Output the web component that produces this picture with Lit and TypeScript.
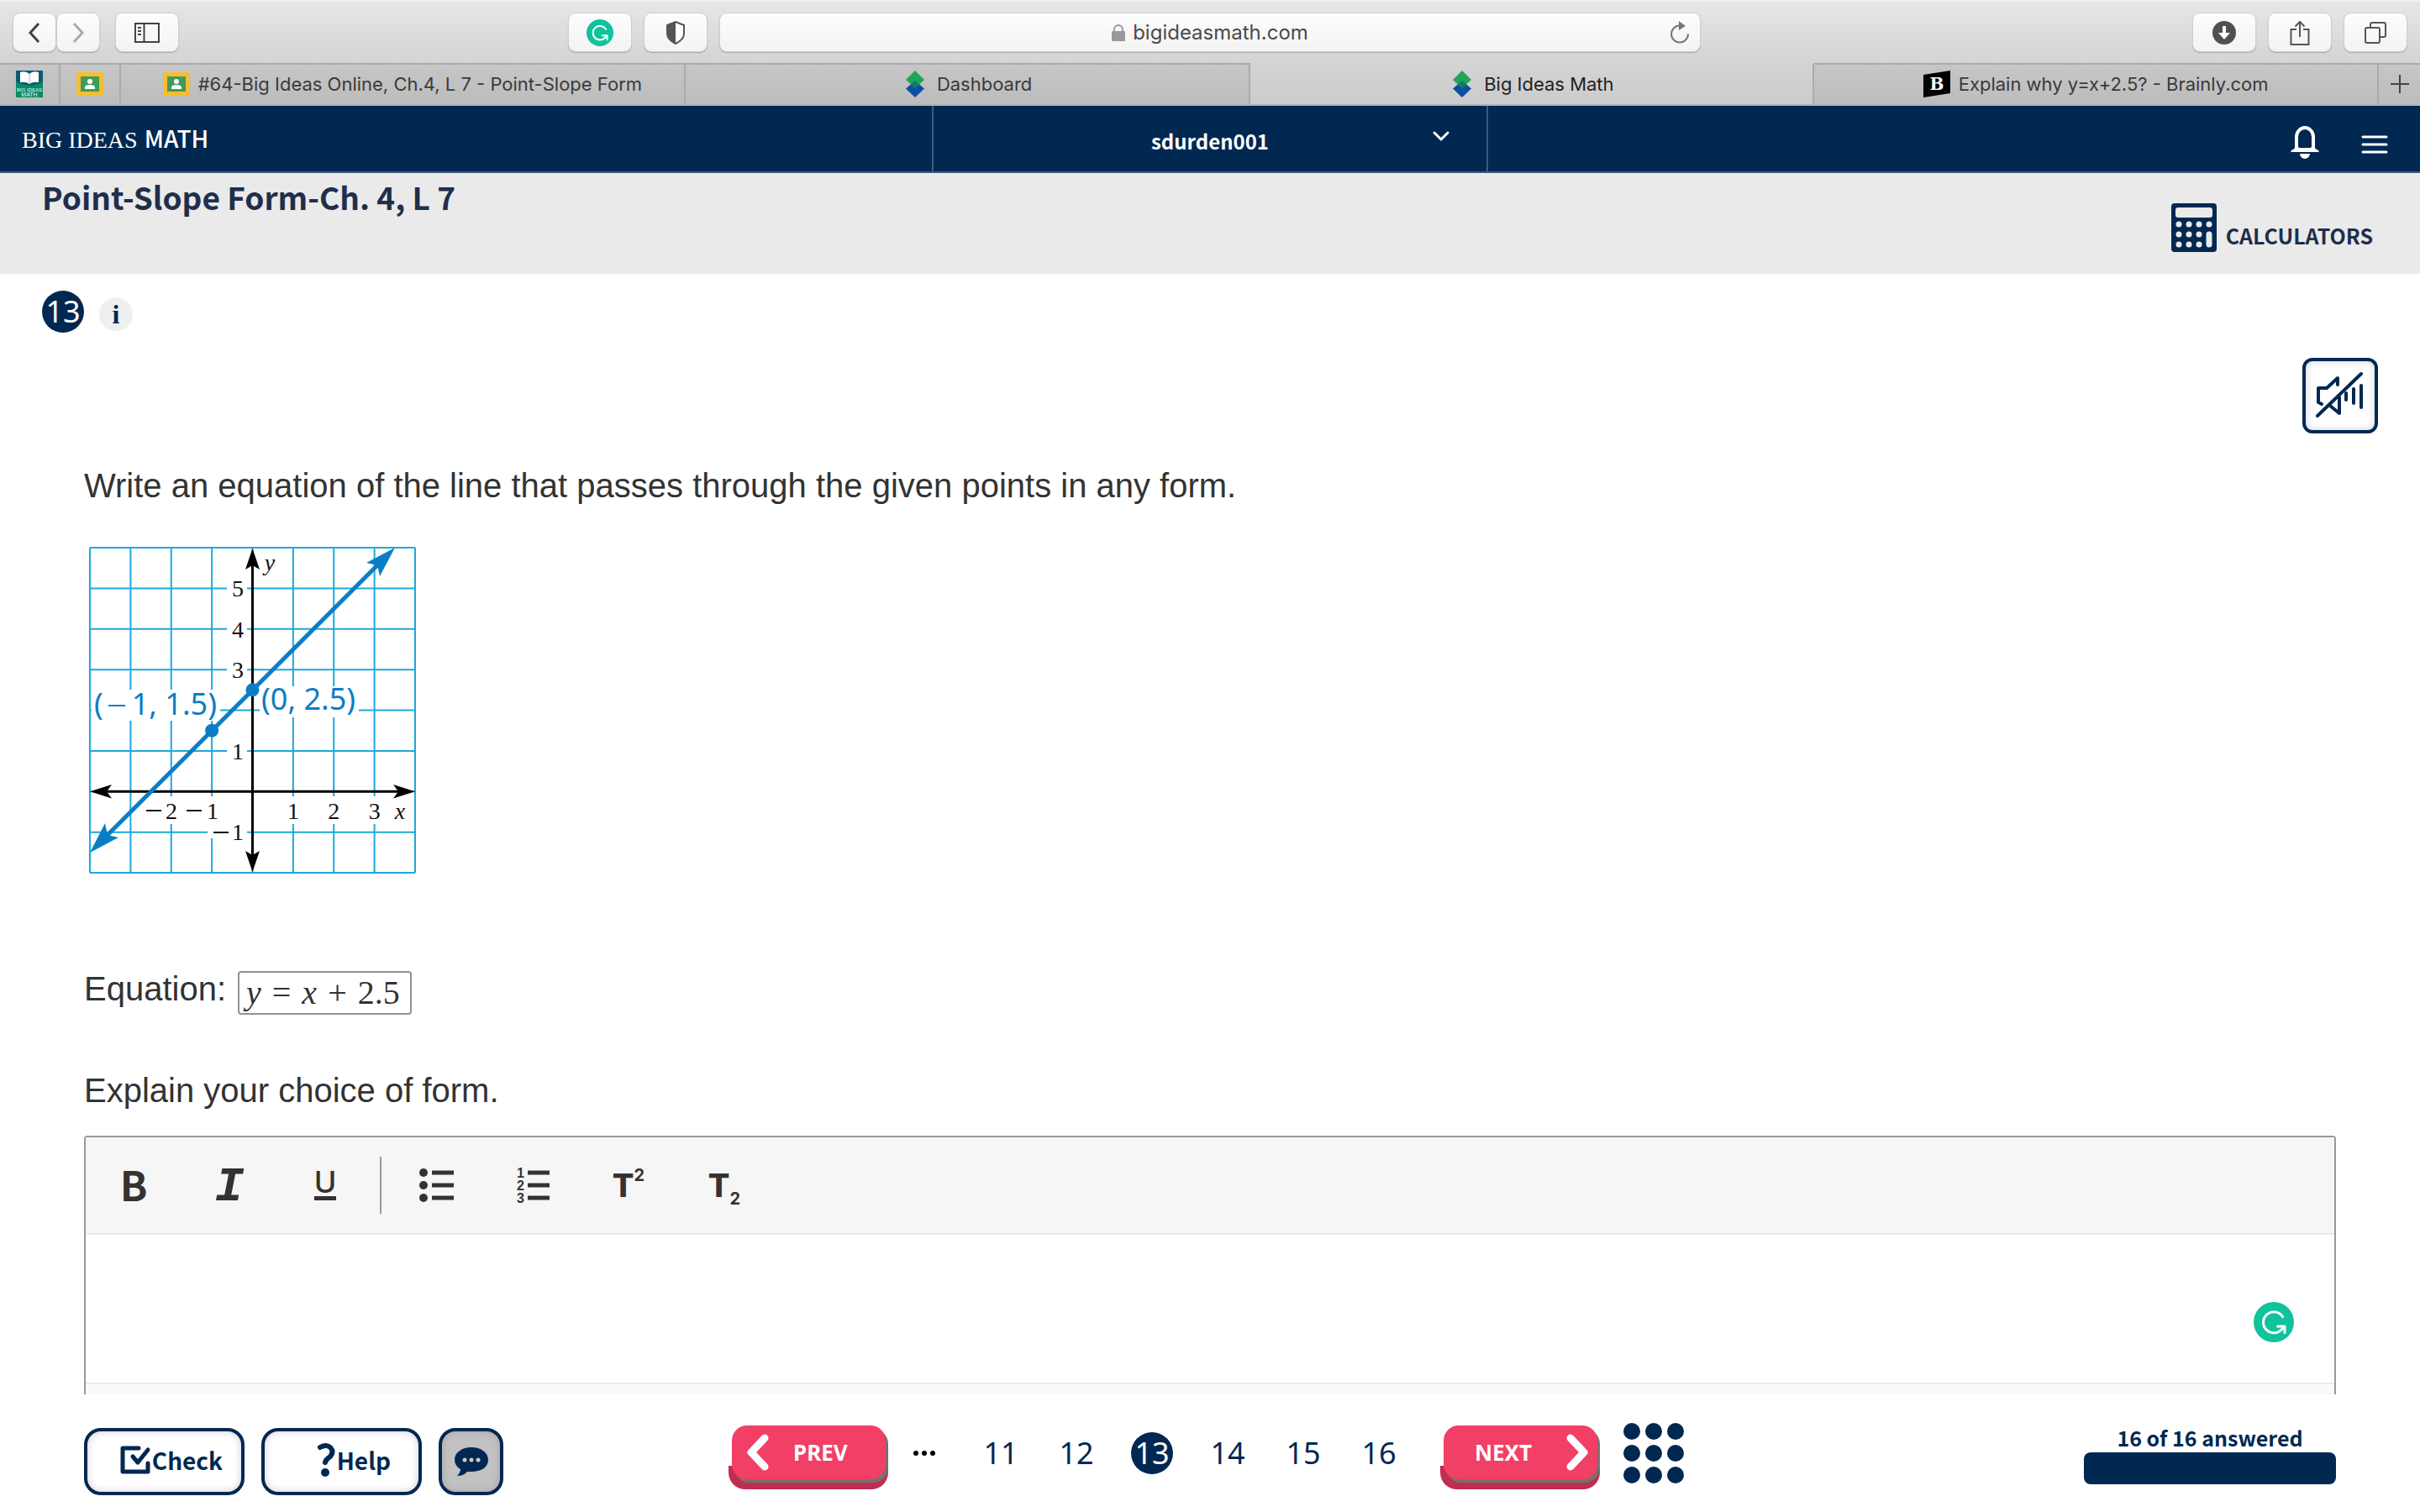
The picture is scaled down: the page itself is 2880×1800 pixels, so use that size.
import { LitElement, html, svg, css } from "lit";
import { customElement, state } from "lit/decorators.js";
import { classMap } from "lit/directives/class-map.js";

const CELL = 48.375;
const SPAN = CELL * 8;
const ORIGIN = { x: CELL * 4, y: CELL * 6 };

const grammarly = svg`
  <circle cx="24" cy="24" r="24" fill="#11c39a" />
  <path d="M34.500 17.500 A12.500 12.500 0 1 0 33 33 L36 30" fill="none" stroke="#fff" stroke-width="3" stroke-linecap="round" />
  <path d="M28.500 29 H37 V36.500" fill="none" stroke="#fff" stroke-width="3" stroke-linecap="round" stroke-linejoin="round" />`;

const classroom = html`<svg class="fav" viewBox="0 0 32 32" aria-hidden="true">
  <rect x="0" y="2" width="32" height="28" rx="2" fill="#f6bd31" />
  <rect x="5" y="7" width="22" height="18" fill="#3f9a5b" />
  <circle cx="16" cy="13" r="3" fill="#fff" />
  <path d="M10 22 v-2 q0 -3 6 -3 t6 3 v2z" fill="#fff" />
</svg>`;

const diamonds = html`<svg class="fav" viewBox="0 0 32 32" aria-hidden="true">
  <path d="M16 12 L27 21.500 L16 32 L5 21.500z" fill="#0a4fa3" />
  <path d="M16 0 L27 11 L16 21 L5 11z" fill="#23a455" />
  <path d="M16 12 L21.500 16.500 L16 21.500 L10.500 16.500z" fill="#157a6a" />
</svg>`;

const brainly = html`<svg class="fav" viewBox="0 0 32 32" aria-hidden="true">
  <path d="M0 5 L32 0 V27 L0 32z" fill="#000" />
  <text x="16" y="23" text-anchor="middle" font-family="DejaVu Serif, serif" font-weight="700" font-size="20" fill="#fff">B</text>
</svg>`;

@customElement("line-graph")
class LineGraph extends LitElement {
  static styles = css`
    :host { display: block; }
    .plot { display: block; width: 388px; height: 388px; overflow: visible; }
    .grid { stroke: #1da9dc; stroke-width: 2; fill: none; }
    .mask { fill: #fff; }
    .axis { stroke: #000; stroke-width: 3; }
    .line { stroke: #0b7dc4; stroke-width: 5; }
    .mark { fill: #0b7dc4; }
    .tick { font: 28px "Liberation Serif", serif; text-anchor: middle; fill: #111; }
    .name { font-style: italic; }
    .minus { stroke: #111; stroke-width: 2; }
    .point { font: 36px "Noto Sans", sans-serif; fill: #0b7dc4; }
    .end { text-anchor: end; }
    .neg { stroke: #0b7dc4; stroke-width: 2; }
  `;

  render() {
    const steps = [...Array(9).keys()];
    const px = (x: number) => ORIGIN.x + x * CELL;
    const py = (y: number) => ORIGIN.y - y * CELL;
    return html`<svg class="plot" viewBox="0 0 388 388" role="img" aria-label="Line through (−1, 1.5) and (0, 2.5)">
      ${steps.map((i) => svg`<path class="grid" d="M${i * CELL} 0 V${SPAN} M0 ${i * CELL} H${SPAN}" />`)}
      ${[5, 4, 3, 1].map((n) => svg`<rect class="mask" x="163" y=${py(n) - 12} width="24" height="24" />`)}
      <rect class="mask" x="140" y="329" width="47" height="17" />
      <rect class="mask" x="64" y="296" width="88" height="33" />
      <rect class="mask" x="226" y="296" width="126" height="33" />
      <rect class="mask" x="2" y="169" width="153" height="37" />
      <rect class="mask" x="202" y="165" width="118" height="37" />

      <path class="axis" d="M${ORIGIN.x} 14 V374 M14 ${ORIGIN.y} H374" />
      <path d="M193.500 1 L202 26 L193.500 21 L185 26z M193.500 386 L202 361 L193.500 366 L185 361z" />
      <path d="M387 290.250 L361 282 L367 290.250 L361 298.500z M0 290.250 L26 282 L20 290.250 L26 298.500z" />

      <path class="line" d="M16 347 L347 16" />
      <path class="mark" d="M363 0 L329 18 L342 21 L345 34z M0 363 L18 328 L21 342 L34 345z" />
      <circle class="mark" cx=${px(-1)} cy=${py(1.5)} r="8" />
      <circle class="mark" cx=${px(0)} cy=${py(2.5)} r="8" />

      ${[5, 4, 3, 1].map((n) => svg`<text class="tick" x="176" y=${py(n) + 10}>${n}</text>`)}
      <text class="tick" x="176" y="348">1</text>
      ${[1, 2, 3].map((n) => svg`<text class="tick" x=${px(n)} y="323">${n}</text>`)}
      <text class="tick" x="97" y="323">2</text>
      <text class="tick" x="146" y="323">1</text>
      <path class="minus" d="M67 313 h18 M115 313 h18 M147 339 h18" />
      <text class="tick name" x="214" y="27">y</text>
      <text class="tick name" x="369" y="323">x</text>
      <text class="point" x="5" y="199">(</text>
      <path class="neg" d="M22 188 h20" />
      <text class="point end" x="151" y="199">1, 1.5)</text>
      <text class="point" x="204" y="193">(0, 2.5)</text>
    </svg>`;
  }
}

@customElement("app-root")
class AppRoot extends LitElement {
  @state() private page = 13;

  static styles = css`
    :host {
      display: flex;
      flex-direction: column;
      height: 100vh;
      overflow: hidden;
      background: #fff;
      color: #333;
      --navy: #002851;
      --source: "Noto Sans CJK SC", "Open Sans", sans-serif;
      --ui: Inter, Roboto, sans-serif;
    }
    * { box-sizing: border-box; }
    button, input, textarea, select { font: inherit; color: inherit; margin: 0; padding: 0; border: 0; background: none; }
    svg { display: block; overflow: visible; }

    .bar { display: flex; align-items: center; height: 75px; padding: 0 16px; background: linear-gradient(#e6e6e6, #d4d4d4); border-top: 2px solid #f2f2f2; }
    .key { display: grid; place-items: center; width: 74px; height: 45px; border-radius: 8px; background: linear-gradient(#fdfdfd, #f3f3f3); box-shadow: 0 0 0 1px #cfcfcf, 0 1px 1px 1px #a8a8a8; }
    .key.slim { width: 50px; }
    .keys { display: flex; flex: 1; gap: 16px; }
    .keys.end { justify-content: flex-end; }
    .pair { display: flex; gap: 2px; margin-right: 4px; }
    .keys .near { margin-left: auto; }
    .address { display: flex; align-items: center; width: 1166px; height: 45px; margin: 0 16px; padding: 0 10px; border-radius: 8px; background: linear-gradient(#fdfdfd, #f3f3f3); box-shadow: 0 0 0 1px #cfcfcf, 0 1px 1px 1px #a8a8a8; }
    .site { display: flex; flex: 1; justify-content: center; align-items: center; gap: 9px; padding-left: 28px; font: 24px/32px var(--ui); color: #4a4a4a; }
    .site input { field-sizing: content; }

    .tabs { display: flex; height: 51px; border-bottom: 2px solid #a9b8b8; background: linear-gradient(#d4d4d4, #cbcbcb); }
    .tab { display: flex; flex: 1; justify-content: center; align-items: center; gap: 10px; min-width: 0; padding-bottom: 1px; border-top: 2px solid #ababab; border-right: 2px solid #ababab; background: linear-gradient(#c6c6c6, #bcbcbc); font: 22px/28px var(--ui); color: #3a3a3a; text-decoration: none; }
    .tab.on { background: none; border-top-color: transparent; color: #222; }
    .tab.pin { flex: none; width: 72px; }
    .tab.add { flex: none; width: 49px; border-right: 0; }
    .fav { width: 32px; height: 32px; }

    .top { display: grid; grid-template-columns: 1fr 23% 1fr; height: 80px; border-bottom: 2px solid #41597a; background: var(--navy); color: #fff; }
    .brand { display: flex; align-items: baseline; gap: 8px; padding: 18px 26px; font: 28px/40px "Liberation Serif", serif; color: #fff; text-decoration: none; }
    .brand .math { font-family: "Noto Sans CJK SC", sans-serif; font-weight: 500; }
    .user { display: grid; border: solid #41597a; border-width: 0 2px; }
    .user select, .user svg { grid-area: 1 / 1; }
    .user select { appearance: none; padding-top: 4px; text-align: center; text-align-last: center; font: 700 24px/40px var(--source); outline: none; }
    .user option { color: #333; }
    .user svg { align-self: center; justify-self: end; margin: 0 44px 8px 0; pointer-events: none; }
    .tools { display: flex; justify-content: flex-end; align-items: center; gap: 50px; padding: 12px 39px 0 0; }
    .bell { margin-bottom: 6px; }

    .heading { display: flex; justify-content: space-between; height: 120px; padding: 0 56px 0 50px; background: #eaeaea; color: #1f2f4b; }
    .heading h1 { margin: 0; padding-top: 4px; font: 700 37px/48px var(--source); }
    .calc { display: flex; align-self: center; align-items: flex-end; gap: 11px; margin-top: 9px; font: 700 25px/32px var(--source); color: #1f2f4b; }
    .calc span { margin-bottom: 4px; }

    .main { flex: 1; min-height: 0; overflow: hidden; padding: 20px 100px 0; font: 40px/48px "Liberation Sans", sans-serif; }
    .badges { display: flex; align-items: center; gap: 18px; margin-left: -50px; height: 50px; }
    .num { display: grid; place-items: center; width: 50px; height: 50px; border-radius: 50%; background: var(--navy); color: #fff; font: 36px/50px "Noto Sans", sans-serif; }
    .info { display: grid; place-items: center; width: 40px; height: 40px; margin-top: 6px; border-radius: 50%; background: #efeff0; color: var(--navy); font: 700 32px/40px "Liberation Serif", serif; }
    .listen { display: grid; place-items: center; width: 90px; height: 90px; margin: 30px -50px 0 auto; border: 4px solid var(--navy); border-radius: 12px; box-shadow: inset 0 0 8px #ccd; }
    .ask { margin: 38px 0 50px; }
    .figure { margin-left: 7px; }
    .answer { display: flex; align-items: flex-start; gap: 14px; margin-top: 116px; line-height: 42px; }
    .formula { display: flex; align-items: center; gap: 13px; height: 52px; padding: 0 12px 0 8px; border: 2px solid #929292; border-radius: 4px; font: 40px/44px "Liberation Serif", serif; outline: none; }
    .why { display: block; margin: 66px 0 30px; }

    .editor { position: relative; border: 2px solid #999; border-radius: 4px; }
    .format { display: flex; align-items: center; height: 116px; background: #f6f6f6; border-bottom: 2px solid #e9e9e9; }
    .format button { display: grid; place-items: center; width: 114px; height: 80px; color: #333; }
    .format .rule { width: 2px; height: 68px; margin: 0 9px 0 8px; background: #999; }
    .bold { padding-bottom: 4px; font: 700 48px/60px var(--source); }
    .ital { padding-top: 6px; font: italic 700 58px/60px "Liberation Mono", monospace; }
    .under { height: 36px; border-bottom: 5px solid #333; font: 500 36px/28px var(--ui); }
    .script { display: flex; height: 44px; font: 800 38px/44px var(--ui); }
    .script small { align-self: flex-start; font: 700 20px/20px var(--ui); }
    .script .low { align-self: flex-end; line-height: 12px; }
    .editor textarea { display: block; width: 100%; height: 176px; resize: none; outline: none; }
    .status { height: 60px; border-top: 2px solid #e9e9e9; background: #fafafa; }
    .assist { position: absolute; right: 48px; top: 196px; width: 48px; height: 48px; }

    .foot { display: grid; grid-template-columns: 1fr auto 1fr; align-items: center; height: 140px; padding: 0 100px; color: var(--navy); }
    .acts { display: flex; gap: 20px; margin-top: 20px; }
    .act { display: flex; align-items: center; justify-content: flex-end; gap: 1px; width: 191px; height: 80px; padding: 0 22px 5px 0; border: 4px solid var(--navy); border-radius: 20px; background: #fff; box-shadow: inset 0 0 10px #ccd; font: 700 28px/40px var(--source); }
    .act.wide { padding-right: 33px; }
    .act.chat { justify-content: center; width: 77px; padding: 0; background: #c2c2c2; box-shadow: inset 0 0 10px #a4a4a8; }
    .pager { display: flex; align-items: center; padding-right: 9px; }
    .step { width: 190px; height: 76px; margin-top: 10px; padding: 0 3px 12px 4px; border-radius: 20px; background: linear-gradient(transparent 48px, #c02d50 48px); }
    .face { display: flex; align-items: center; height: 64px; border-radius: 18px; background: #f23f66; box-shadow: 3px 4px 0 #77706f; color: #fff; font: 700 26px/40px "Noto Sans", sans-serif; }
    .face.prev { padding-left: 18px; gap: 29px; }
    .face.next { justify-content: flex-end; padding-right: 11px; gap: 41px; }
    .more { width: 89px; display: flex; justify-content: center; padding-right: 3px; }
    .page { display: grid; place-items: center; width: 90px; font: 36px/50px "Noto Sans", sans-serif; }
    .page.on span { width: 50px; border-radius: 50%; background: var(--navy); color: #fff; }
    .space { margin-left: 28px; margin-right: 28px; }
    .done { justify-self: end; width: 300px; text-align: center; font: 700 25px/36px var(--source); }
    .meter { height: 38px; border-radius: 8px; background: #dde; overflow: hidden; }
    .fill { height: 100%; background: var(--navy); }
  `;

  private browserBar() {
    return html`<nav class="bar" aria-label="Browser">
      <div class="keys">
        <div class="pair">
          <button class="key slim" aria-label="Back"><svg width="16" height="26" viewBox="0 0 16 26"><path d="M13 2 L3 13 L13 24" fill="none" stroke="#444" stroke-width="3" /></svg></button>
          <button class="key slim" aria-label="Forward"><svg width="16" height="26" viewBox="0 0 16 26"><path d="M3 2 L13 13 L3 24" fill="none" stroke="#aaa" stroke-width="3" /></svg></button>
        </div>
        <button class="key" aria-label="Sidebar"><svg width="30" height="24" viewBox="0 0 30 24"><path d="M1 1 H29 V23 H1z M11.500 1 V23 M4 6 h4 M4 10 h4 M4 14 h4" fill="none" stroke="#444" stroke-width="2" /></svg></button>
        <button class="key near" aria-label="Writing assistant"><svg width="32" height="32" viewBox="0 0 48 48">${grammarly}</svg></button>
        <button class="key" aria-label="Privacy report"><svg width="24" height="28" viewBox="0 0 24 28"><path d="M12 1 L22 5 V15 Q22 22 12 27 Q2 22 2 15 V5z" fill="#fff" stroke="#555" stroke-width="2" /><path d="M12 1 L2 5 V15 Q2 22 12 27z" fill="#555" /></svg></button>
      </div>
      <div class="address">
        <label class="site">
          <svg width="16" height="20" viewBox="0 0 16 20" aria-hidden="true"><rect y="8" width="16" height="12" rx="1" fill="#999" /><path d="M3 9 V6 a5 5 0 0 1 10 0 V9" fill="none" stroke="#999" stroke-width="2" /></svg>
          <input aria-label="Address" .value=${"bigideasmath.com"} />
        </label>
        <button aria-label="Reload"><svg width="28" height="28" viewBox="0 0 28 28"><path d="M14 5.500 A10 10 0 1 0 24 15.500" fill="none" stroke="#777" stroke-width="2" /><path d="M13 0 L21 6 L13 11z" fill="#777" /></svg></button>
      </div>
      <div class="keys end">
        <button class="key" aria-label="Downloads"><svg width="28" height="28" viewBox="0 0 28 28"><circle cx="14" cy="14" r="14" fill="#505050" /><path d="M12 6 h4 v8 h5 L14 22 L7 14 h5z" fill="#fff" /></svg></button>
        <button class="key" aria-label="Share"><svg width="24" height="30" viewBox="0 0 24 30"><path d="M8 11 H1.500 V29 H22.500 V11 H16 M12 20 V2 M6.500 7.500 L12 2 L17.500 7.500" fill="none" stroke="#555" stroke-width="2" /></svg></button>
        <button class="key" aria-label="Show tabs"><svg width="26" height="26" viewBox="0 0 26 26"><rect x="1" y="7" width="17" height="18" rx="2" fill="none" stroke="#555" stroke-width="2" /><path d="M7 7 V3 q0 -2 2 -2 H23 q2 0 2 2 V16 q0 2 -2 2 H19" fill="none" stroke="#555" stroke-width="2" /></svg></button>
      </div>
    </nav>`;
  }

  private tabStrip() {
    return html`<nav class="tabs" aria-label="Tabs">
      <a class="tab pin" href="#" aria-label="Big Ideas Math book">
        <svg class="fav" viewBox="0 0 32 32"><rect width="32" height="32" fill="#0b8a63" /><path d="M0 0 H32 V13 Q16 22 0 13z" fill="#0a5a78" /><path d="M5 2 Q12 0 16 4 Q20 0 27 2 V14 Q20 13 16 16 Q12 13 5 14z" fill="#fff" /><path d="M16 4 V16" stroke="#9bc" stroke-width="1" /><text x="16" y="25" font-size="6" font-family="Liberation Sans" text-anchor="middle" fill="#dff">BIG IDEAS</text><text x="16" y="31" font-size="7" font-family="Liberation Sans" text-anchor="middle" fill="#dff">MATH</text></svg>
      </a>
      <a class="tab pin" href="#" aria-label="Classroom">${classroom}</a>
      <a class="tab" href="#">${classroom}<span>#64-Big Ideas Online, Ch.4, L 7 - Point-Slope Form</span></a>
      <a class="tab" href="#">${diamonds}<span>Dashboard</span></a>
      <a class="tab on" href="#" aria-current="page">${diamonds}<span>Big Ideas Math</span></a>
      <a class="tab" href="#">${brainly}<span>Explain why y=x+2.5? - Brainly.com</span></a>
      <button class="tab add" aria-label="New tab"><svg width="22" height="22" viewBox="0 0 22 22"><path d="M11 0 V22 M0 11 H22" stroke="#444" stroke-width="2" /></svg></button>
    </nav>`;
  }

  private siteHeader() {
    return html`<header>
      <div class="top">
        <a class="brand" href="#"><span>BIG IDEAS</span><span class="math">MATH</span></a>
        <label class="user">
          <select aria-label="Account"><option>sdurden001</option></select>
          <svg width="20" height="12" viewBox="0 0 20 12"><path d="M2 2 L10 10 L18 2" fill="none" stroke="#fff" stroke-width="3" stroke-linecap="round" stroke-linejoin="round" /></svg>
        </label>
        <div class="tools">
          <button class="bell" aria-label="Notifications"><svg width="36" height="40" viewBox="0 0 36 40"><path d="M8 29 V14 a10 11 0 0 1 20 0 V29" fill="none" stroke="#fff" stroke-width="4" /><path d="M2 30 Q8 27 8 22 L11 27 H25 L28 22 Q28 27 34 30 q2 2 -1 2 H3 q-3 0 -1 -2z M12 34 H24 a6 6 0 0 1 -12 0z" fill="#fff" /></svg></button>
          <button aria-label="Menu"><svg width="30" height="24" viewBox="0 0 30 24"><path d="M1 3 H29 M1 12 H29 M1 21 H29" stroke="#fff" stroke-width="3" stroke-linecap="round" /></svg></button>
        </div>
      </div>
      <div class="heading">
        <h1>Point-Slope Form-Ch. 4, L 7</h1>
        <button class="calc">
          <svg width="54" height="58" viewBox="0 0 54 58"><rect width="54" height="58" rx="4" fill="#002851" /><rect x="5" y="5" width="44" height="12" rx="3" fill="#eaeaea" />
            ${[25, 37, 49].map((y) => [9, 21, 33, 45].map((x) => (x === 45 && y > 25 ? "" : svg`<circle cx=${x} cy=${y} r="3.500" fill="#eaeaea" />`)))}
            <rect x="41.500" y="33.500" width="7" height="19" rx="3.500" fill="#eaeaea" /></svg>
          <span>CALCULATORS</span>
        </button>
      </div>
    </header>`;
  }

  private editor() {
    const bars = svg`<path d="M15 6 H41 M15 21 H41 M15 36 H41" stroke="#333" stroke-width="5" />`;
    return html`<div class="editor">
      <div class="format" role="toolbar" aria-label="Formatting">
        <button aria-label="Bold"><span class="bold">B</span></button>
        <button aria-label="Italic"><span class="ital">I</span></button>
        <button aria-label="Underline"><span class="under">U</span></button>
        <span class="rule"></span>
        <button aria-label="Bulleted list"><svg width="42" height="42" viewBox="0 0 42 42">${bars}<circle cx="5" cy="6" r="5" fill="#333" /><circle cx="5" cy="21" r="5" fill="#333" /><circle cx="5" cy="36" r="5" fill="#333" /></svg></button>
        <button aria-label="Numbered list"><svg width="42" height="42" viewBox="0 0 42 42">${bars}<g font-family="Liberation Sans, sans-serif" font-weight="700" font-size="16" fill="#333"><text x="2" y="12">1</text><text x="2" y="27">2</text><text x="2" y="42">3</text></g></svg></button>
        <button aria-label="Superscript"><span class="script">T<small>2</small></span></button>
        <button aria-label="Subscript"><span class="script">T<small class="low">2</small></span></button>
      </div>
      <textarea id="why" spellcheck="false"></textarea>
      <div class="status"></div>
      <button class="assist" aria-label="Check writing"><svg width="48" height="48" viewBox="0 0 48 48">${grammarly}</svg></button>
    </div>`;
  }

  private footer() {
    const answered = 16;
    const total = 16;
    return html`<footer class="foot">
      <div class="acts">
        <button class="act"><svg width="37" height="36" viewBox="0 0 37 36"><path d="M22 4 H3 V32 H33 V22" fill="none" stroke="#002851" stroke-width="5" stroke-linecap="round" stroke-linejoin="round" /><path d="M15 14 L21 21 L33 6" fill="none" stroke="#002851" stroke-width="5" stroke-linecap="round" stroke-linejoin="round" /></svg>Check</button>
        <button class="act wide"><svg width="22" height="40" viewBox="0 0 22 40"><path d="M3 5 Q10 1 15 5 Q20 10 15 16 Q10 19 9 23" fill="none" stroke="#002851" stroke-width="6" stroke-linecap="round" /><circle cx="9" cy="35" r="5" fill="#002851" /></svg>Help</button>
        <button class="act chat" aria-label="Comments"><svg width="40" height="36" viewBox="0 0 40 36"><path d="M20 1 C31 1 40 7 40 16 C40 25 31 30 20 30 Q17 30 15 30 Q11 35 3 35 Q7 31 7 27 Q0 23 0 16 C0 7 9 1 20 1z" fill="#002851" /><circle cx="12" cy="16" r="2.500" fill="#ccc" /><circle cx="20" cy="16" r="2.500" fill="#ccc" /><circle cx="28" cy="16" r="2.500" fill="#ccc" /></svg></button>
      </div>
      <nav class="pager" aria-label="Questions">
        <button class="step" @click=${() => (this.page = Math.max(11, this.page - 1))}><span class="face prev"><svg width="26" height="44" viewBox="0 0 26 44"><path d="M21 5 L5 22 L21 39" fill="none" stroke="#fff" stroke-width="9" stroke-linecap="round" stroke-linejoin="round" /></svg>PREV</span></button>
        <span class="more"><svg width="26" height="6" viewBox="0 0 26 6"><circle cx="3" cy="3" r="3" /><circle cx="13" cy="3" r="3" /><circle cx="23" cy="3" r="3" /></svg></span>
        ${[11, 12, 13, 14, 15, 16].map((n) => html`<button class=${classMap({ page: true, on: n === this.page })} @click=${() => (this.page = n)}><span>${n}</span></button>`)}
        <button class="step space" @click=${() => (this.page = Math.min(16, this.page + 1))}><span class="face next">NEXT<svg width="26" height="44" viewBox="0 0 26 44"><path d="M5 5 L21 22 L5 39" fill="none" stroke="#fff" stroke-width="9" stroke-linecap="round" stroke-linejoin="round" /></svg></span></button>
        <button aria-label="All questions"><svg width="72" height="72" viewBox="0 0 72 72">${[10, 36, 62].map((y) => [10, 36, 62].map((x) => svg`<circle cx=${x} cy=${y} r="10" fill="#002851" />`))}</svg></button>
      </nav>
      <div class="done">
        <div>${answered} of ${total} answered</div>
        <div class="meter"><div class="fill" style="width:${(answered / total) * 100}%"></div></div>
      </div>
    </footer>`;
  }

  render() {
    return html`
      ${this.browserBar()} ${this.tabStrip()} ${this.siteHeader()}
      <main class="main">
        <div class="badges"><span class="num">${this.page}</span><button class="info" aria-label="Information">i</button></div>
        <button class="listen" aria-label="Read aloud off"><svg width="58" height="56" viewBox="0 0 58 56"><g fill="none" stroke="#002851" stroke-width="4" stroke-linejoin="round" stroke-linecap="round"><path d="M7 38 L3 36 V19 H13 L26 7 V15 M28 30 V49 L17 40" /><path d="M2 52 L54 2" /><path d="M36 25 V33 M45 20 V37 M54 16 V42" /></g></svg></button>
        <p class="ask">Write an equation of the line that passes through the given points in any form.</p>
        <line-graph class="figure"></line-graph>
        <div class="answer">
          <span id="eq">Equation:</span>
          <span class="formula" role="textbox" aria-labelledby="eq" tabindex="0"><i>y</i><span>=</span><i>x</i><span>+</span><span>2.5</span></span>
        </div>
        <label class="why" for="why">Explain your choice of form.</label>
        ${this.editor()}
      </main>
      ${this.footer()}
    `;
  }
}
